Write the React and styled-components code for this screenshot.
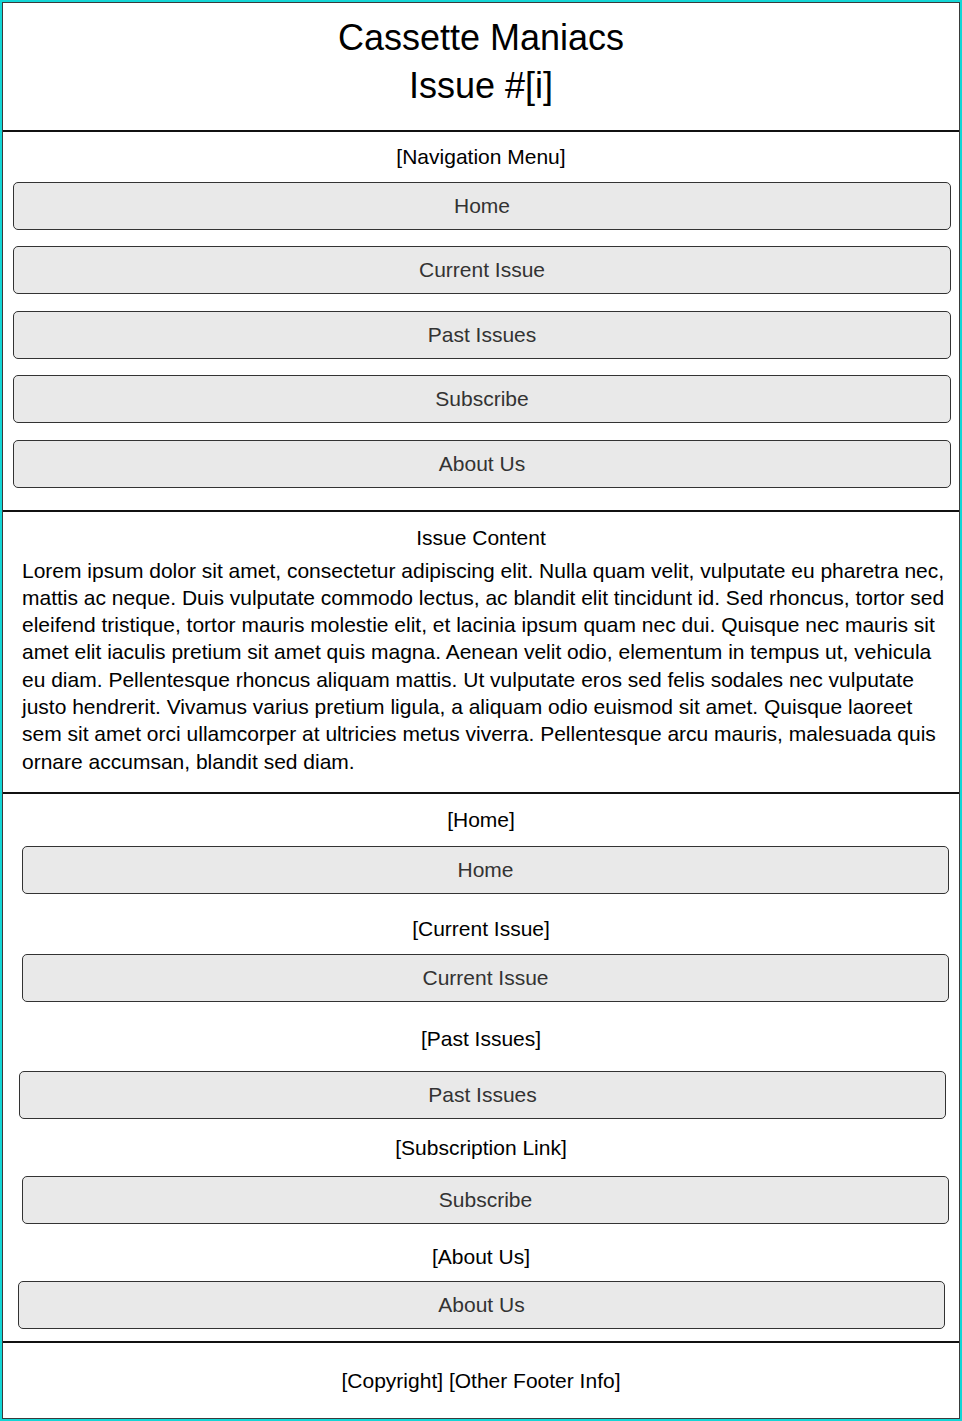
import styled, { createGlobalStyle } from 'styled-components';

const GlobalStyle = createGlobalStyle`
	html, body {
		margin: 0;
		padding: 0;
		background: #fff;
	}
	* {
		box-sizing: border-box;
	}
`;

const Frame = styled.div`
	width: 962px;
	height: 1421px;
	border: 2px solid #12d6d6;
	font-family: "Liberation Sans", Arial, sans-serif;
	color: #000;
`;

const Inner = styled.div`
	height: 100%;
	border: 1px solid #3a3a3a;
	display: flex;
	flex-direction: column;
`;

const Section = styled.section`
	border-bottom: 2px solid #111;
	padding: ${p => p.$pad || '0'};
	display: flex;
	flex-direction: column;
`;

const Title = styled.h1`
	margin: 0;
	font-weight: normal;
	font-size: 36px;
	line-height: 48px;
	text-align: center;
`;

const Label = styled.div`
	font-size: 21px;
	line-height: 24px;
	text-align: center;
	margin-top: ${p => p.$top || 0}px;
`;

const NavList = styled.div`
	display: flex;
	flex-direction: column;
	gap: 16.4px;
	margin: 13px 8px 0 10px;
`;

const Button = styled.button`
	display: block;
	height: 48px;
	width: ${p => (p.$w ? `${p.$w}px` : 'auto')};
	margin: ${p => p.$top || 0}px 0 0 ${p => p.$left || 0}px;
	background: #e9e9e9;
	border: 1px solid #333;
	border-radius: 5px;
	font-family: inherit;
	font-size: 21px;
	color: #333;
	cursor: pointer;
	padding: 0;
`;

const Paragraph = styled.p`
	margin: 7px 12px 0 19px;
	font-size: 21px;
	line-height: 27.3px;
`;

const Footer = styled.footer`
	flex: 1;
	display: flex;
	align-items: center;
	justify-content: center;
	font-size: 21px;
	padding-top: 2px;
`;

const navItems = ['Home', 'Current Issue', 'Past Issues', 'Subscribe', 'About Us'];

const linkBlocks = [
	{ label: '[Home]', text: 'Home', top: 0, gap: 14, left: 19 },
	{ label: '[Current Issue]', text: 'Current Issue', top: 23, gap: 13, left: 19 },
	{ label: '[Past Issues]', text: 'Past Issues', top: 25, gap: 20, left: 16 },
	{ label: '[Subscription Link]', text: 'Subscribe', top: 17, gap: 16, left: 19 },
	{ label: '[About Us]', text: 'About Us', top: 21, gap: 12, left: 15 },
];

export default function App() {
	return (
		<>
			<GlobalStyle />
			<Frame>
				<Inner>
					<Section $pad="11px 0 20px">
						<Title>Cassette Maniacs<br />Issue #[i]</Title>
					</Section>

					<Section $pad="13px 0 22px">
						<Label>[Navigation Menu]</Label>
						<NavList>
							{navItems.map((item, i) => (
								<Button key={i}>{item}</Button>
							))}
						</NavList>
					</Section>

					<Section $pad="14px 0 17px">
						<Label>Issue Content</Label>
						<Paragraph>
							Lorem ipsum dolor sit amet, consectetur adipiscing elit. Nulla quam velit, vulputate eu pharetra nec,
							mattis ac neque. Duis vulputate commodo lectus, ac blandit elit tincidunt id. Sed rhoncus, tortor sed
							eleifend tristique, tortor mauris molestie elit, et lacinia ipsum quam nec dui. Quisque nec mauris sit
							amet elit iaculis pretium sit amet quis magna. Aenean velit odio, elementum in tempus ut, vehicula eu
							diam. Pellentesque rhoncus aliquam mattis. Ut vulputate eros sed felis sodales nec vulputate justo
							hendrerit. Vivamus varius pretium ligula, a aliquam odio euismod sit amet. Quisque laoreet sem sit
							amet orci ullamcorper at ultricies metus viverra. Pellentesque arcu mauris, malesuada quis ornare
							accumsan, blandit sed diam.
						</Paragraph>
					</Section>

					<Section $pad="14px 0 12px">
						{linkBlocks.map((b, i) => (
							<div key={i}>
								<Label $top={b.top}>{b.label}</Label>
								<Button $top={b.gap} $left={b.left} $w={927}>{b.text}</Button>
							</div>
						))}
					</Section>

					<Footer>[Copyright] [Other Footer Info]</Footer>
				</Inner>
			</Frame>
		</>
	);
}
